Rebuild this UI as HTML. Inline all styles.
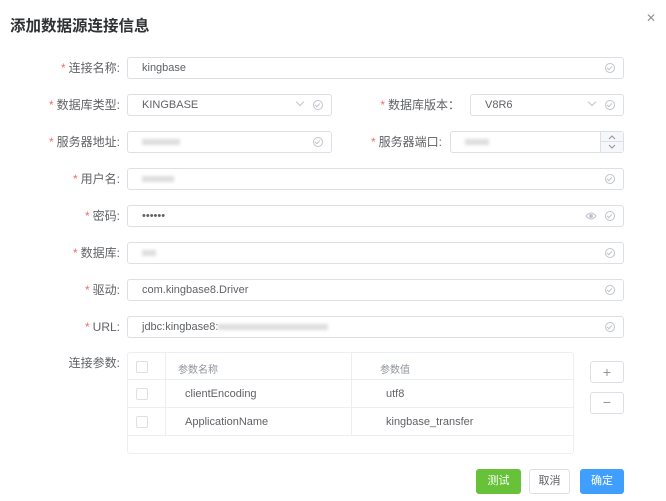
<!DOCTYPE html><html><head><meta charset="utf-8"><style>
body{margin:0;width:666px;height:501px;background:#fff;font-family:"Liberation Sans","Noto Sans CJK SC",sans-serif;position:relative;overflow:hidden;color:#606266}
.a{position:absolute}
.t{left:10px;top:14px;font-size:15.5px;font-weight:bold;color:#303133}
.x{left:646px;top:11px;font-size:12px;color:#909399}
.l{font-size:12px;text-align:right;line-height:22px}
.l b{color:#f56c6c;font-weight:normal;margin-right:3px}
.i{border:1px solid #dcdfe6;border-radius:3px;box-sizing:border-box;height:22px;font-size:11px;line-height:21px;padding-left:14px;color:#606266}
.ck{position:absolute;right:8px;top:5px;width:8px;height:8px;border:1px solid #c0c4cc;border-radius:50%}
.ck:after{content:"";position:absolute;left:2px;top:1px;width:2px;height:4px;border:solid #c0c4cc;border-width:0 1px 1px 0;transform:rotate(45deg)}
.dd{position:absolute;right:28px;top:4px;width:5px;height:5px;border:solid #c0c4cc;border-width:0 1px 1px 0;transform:rotate(45deg)}
.blur{display:inline-block;height:6px;background:#ddd;filter:blur(1.5px);vertical-align:middle}
.tb{border:1px solid #ebeef5;border-radius:3px;box-sizing:border-box}
.cb{position:absolute;width:10px;height:10px;border:1px solid #dcdfe6;border-radius:2px;left:8px}
.r{position:absolute;left:0;right:0;border-bottom:1px solid #ebeef5;font-size:11px}
.btn{border:1px solid #dcdfe6;border-radius:3px;box-sizing:border-box;text-align:center;font-size:11px}
</style></head><body>
<div class="a t">添加数据源连接信息</div>
<div class="a x">✕</div>

<div class="a l" style="right:546px;top:57px"><b>*</b>连接名称:</div>
<div class="a i" style="left:127px;top:57px;width:497px">kingbase<span class="ck"></span></div>

<div class="a l" style="right:546px;top:94px"><b>*</b>数据库类型:</div>
<div class="a i" style="left:127px;top:94px;width:205px">KINGBASE<span class="dd"></span><span class="ck"></span></div>
<div class="a l" style="right:206px;top:94px"><b>*</b>数据库版本：</div>
<div class="a i" style="left:470px;top:94px;width:154px">V8R6<span class="dd"></span><span class="ck"></span></div>

<div class="a l" style="right:546px;top:131px"><b>*</b>服务器地址:</div>
<div class="a i" style="left:127px;top:131px;width:205px"><span class="blur" style="width:38px"></span><span class="ck"></span></div>
<div class="a l" style="right:224px;top:131px"><b>*</b>服务器端口:</div>
<div class="a i" style="left:450px;top:131px;width:174px"><span class="blur" style="width:24px"></span>
<div style="position:absolute;right:0;top:0;width:22px;height:20px;border-left:1px solid #dcdfe6;background:#f5f7fa">
<div style="height:9px;border-bottom:1px solid #dcdfe6"></div>
<svg class="a" style="left:7px;top:2px" width="8" height="16"><path d="M1 5L4 2L7 5M1 11L4 14L7 11" fill="none" stroke="#909399" stroke-width="1"/></svg></div></div>

<div class="a l" style="right:546px;top:168px"><b>*</b>用户名:</div>
<div class="a i" style="left:127px;top:168px;width:497px"><span class="blur" style="width:32px"></span><span class="ck"></span></div>

<div class="a l" style="right:546px;top:205px"><b>*</b>密码:</div>
<div class="a i" style="left:127px;top:205px;width:497px">••••••<svg class="a" style="right:26px;top:5px" width="12" height="10"><path d="M1 5Q6 -1 11 5Q6 11 1 5Z" fill="none" stroke="#c0c4cc"/><circle cx="6" cy="5" r="2" fill="#c0c4cc"/></svg><span class="ck"></span></div>

<div class="a l" style="right:546px;top:242px"><b>*</b>数据库:</div>
<div class="a i" style="left:127px;top:242px;width:497px"><span class="blur" style="width:14px"></span><span class="ck"></span></div>

<div class="a l" style="right:546px;top:279px"><b>*</b>驱动:</div>
<div class="a i" style="left:127px;top:279px;width:497px">com.kingbase8.Driver<span class="ck"></span></div>

<div class="a l" style="right:546px;top:316px"><b>*</b>URL:</div>
<div class="a i" style="left:127px;top:316px;width:497px">jdbc:kingbase8:<span class="blur" style="width:110px"></span><span class="ck"></span></div>

<div class="a l" style="right:546px;top:352px">连接参数:</div>
<div class="a tb" style="left:127px;top:352px;width:447px;height:102px">
<div class="r" style="top:0;height:26px;color:#909399;font-size:10px"><span class="cb" style="top:8px"></span><span class="a" style="left:50px;top:8px">参数名称</span><span class="a" style="left:252px;top:8px">参数值</span></div>
<div class="r" style="top:27px;height:27px;color:#606266"><span class="cb" style="top:8px"></span><span class="a" style="left:57px;top:8px">clientEncoding</span><span class="a" style="left:258px;top:8px">utf8</span></div>
<div class="r" style="top:55px;height:27px;color:#606266"><span class="cb" style="top:8px"></span><span class="a" style="left:57px;top:8px">ApplicationName</span><span class="a" style="left:258px;top:8px">kingbase_transfer</span></div>
<div class="a" style="left:37px;top:0;height:82px;border-left:1px solid #ebeef5"></div>
<div class="a" style="left:223px;top:0;height:82px;border-left:1px solid #ebeef5"></div>
</div>
<div class="a btn" style="left:590px;top:361px;width:34px;height:22px;line-height:20px;font-size:14px;color:#909399">+</div>
<div class="a btn" style="left:590px;top:392px;width:34px;height:22px;line-height:19px;font-size:14px;color:#909399">−</div>

<div class="a btn" style="left:476px;top:469px;width:45px;height:25px;line-height:23px;background:#67c23a;border-color:#67c23a;color:#fff">测试</div>
<div class="a btn" style="left:529px;top:469px;width:41px;height:25px;line-height:23px;color:#606266">取消</div>
<div class="a btn" style="left:580px;top:469px;width:44px;height:25px;line-height:23px;background:#409eff;border-color:#409eff;color:#fff">确定</div>
</body></html>
